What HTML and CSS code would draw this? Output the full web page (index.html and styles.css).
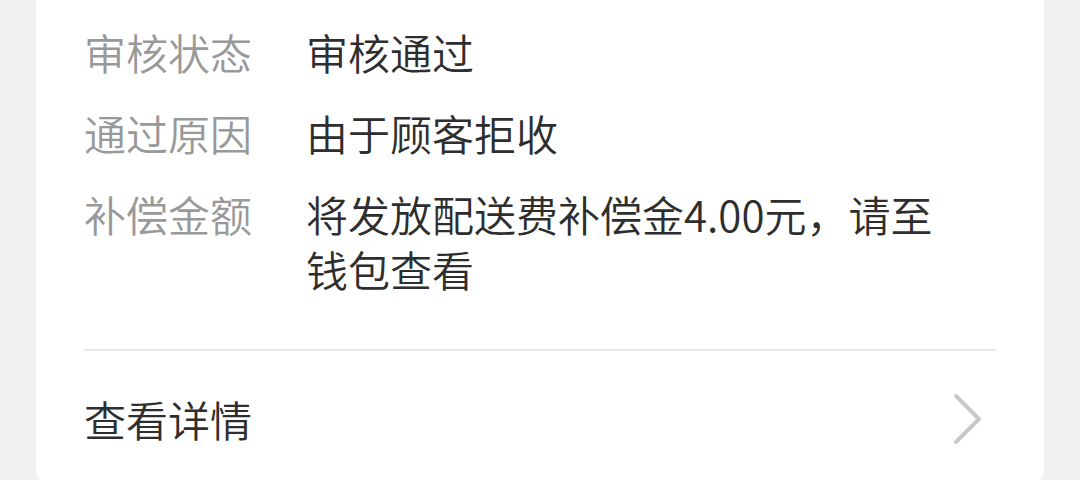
FILE: index.html
```html
<!DOCTYPE html>
<html lang="zh-CN">
<head>
<meta charset="utf-8">
<title>审核结果</title>
<link rel="stylesheet" href="styles.css">
</head>
<body>
<div class="card">
  <div class="info">
    <div class="row">
      <div class="label">审核状态</div>
      <div class="value">审核通过</div>
    </div>
    <div class="row">
      <div class="label">通过原因</div>
      <div class="value">由于顾客拒收</div>
    </div>
    <div class="row">
      <div class="label">补偿金额</div>
      <div class="value">将发放配送费补偿金4.00元，请至钱包查看</div>
    </div>
  </div>
  <div class="detail">
    <span class="detail-text">查看详情</span>
    <svg class="chevron" width="32" height="54" viewBox="0 0 32 54" aria-hidden="true">
      <polyline points="4,4 27,27 4,50" fill="none" stroke="#c9c9c9" stroke-width="4" stroke-linecap="round" stroke-linejoin="round"/>
    </svg>
  </div>
</div>
</body>
</html>
```

FILE: styles.css
```css
html, body {
  margin: 0;
  padding: 0;
}

body {
  background: #f1f1f1;
  height: 480px;
  overflow: hidden;
  font-family: "Noto Sans CJK SC", "Noto Sans", sans-serif;
  font-weight: 350;
}

.card {
  margin: 0 36px;
  background: #ffffff;
  border-radius: 0 0 16px 16px;
  padding: 24px 48px 0;
}

.info {
  display: flex;
  flex-direction: column;
  gap: 26px;
  padding-bottom: 53px;
  border-bottom: 2px solid #e6e6e6;
}

.row {
  display: flex;
  font-size: 42px;
  line-height: 55px;
}

.label {
  width: 222px;
  flex-shrink: 0;
  color: #999999;
}

.value {
  flex: 1;
  color: #2e2e2e;
  padding-right: 40px;
}

.detail {
  display: flex;
  align-items: center;
  justify-content: space-between;
  padding: 40px 12px 40px 0;
}

.detail-text {
  font-size: 42px;
  line-height: 55px;
  color: #2e2e2e;
}

.chevron {
  display: block;
}
```
